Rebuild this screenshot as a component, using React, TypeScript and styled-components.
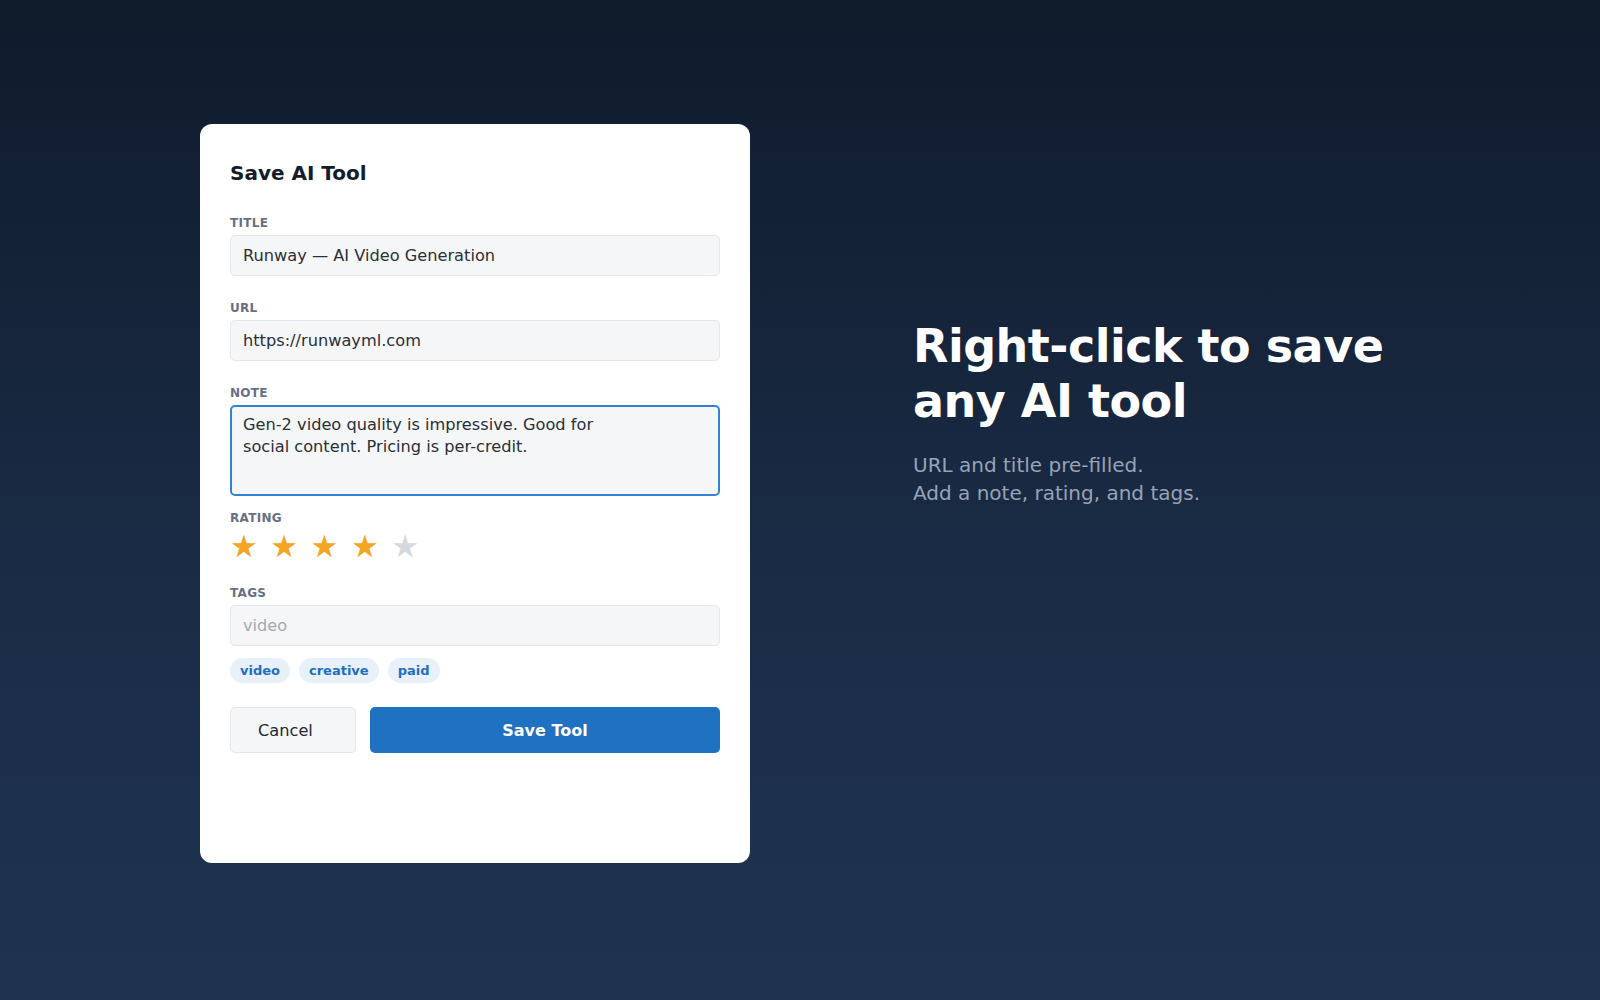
import styled, { createGlobalStyle } from "styled-components";

const GlobalStyle = createGlobalStyle`
  * {
    box-sizing: border-box;
  }
  html,
  body {
    margin: 0;
    padding: 0;
  }
  body {
    font-family: "DejaVu Sans", "Liberation Sans", sans-serif;
    background: #0f1b2b;
  }
`;

const tags = ["video", "creative", "paid"];
const rating = 4;

const App = () => {
  return (
    <Page>
      <GlobalStyle />
      <Card>
        <CardTitle>Save AI Tool</CardTitle>

        <Field>
          <Label>Title</Label>
          <Input readOnly value="Runway — AI Video Generation" />
        </Field>

        <Field>
          <Label>URL</Label>
          <Input readOnly value="https://runwayml.com" />
        </Field>

        <Field $gap={15}>
          <Label>Note</Label>
          <NoteArea
            readOnly
            value={"Gen-2 video quality is impressive. Good for\nsocial content. Pricing is per-credit."}
          />
        </Field>

        <Field $gap={24}>
          <Label>Rating</Label>
          <Stars>
            {[1, 2, 3, 4, 5].map((n) => (
              <Star key={n} $on={n <= rating}>
                ★
              </Star>
            ))}
          </Stars>
        </Field>

        <Field $gap={12}>
          <Label>Tags</Label>
          <Input readOnly placeholder="video" />
        </Field>

        <ChipRow>
          {tags.map((t) => (
            <Chip key={t}>{t}</Chip>
          ))}
        </ChipRow>

        <Actions>
          <CancelButton>Cancel</CancelButton>
          <SaveButton>Save Tool</SaveButton>
        </Actions>
      </Card>

      <Pitch>
        <Headline>Right-click to save any AI tool</Headline>
        <Subline>
          URL and title pre-filled.
          <br />
          Add a note, rating, and tags.
        </Subline>
      </Pitch>
    </Page>
  );
};

const Page = styled.div`
  min-height: 100vh;
  display: flex;
  align-items: flex-start;
  gap: 163px;
  padding: 124px 200px;
  background: linear-gradient(180deg, #0f1b2b 0%, #1a2b45 55%, #1f3350 100%);
`;

const Card = styled.div`
  width: 550px;
  min-height: 739px;
  flex: 0 0 auto;
  display: flex;
  flex-direction: column;
  padding: 37px 30px 30px;
  background: #ffffff;
  border-radius: 12px;
`;

const CardTitle = styled.h2`
  margin: 0 0 31px;
  font-size: 20px;
  line-height: 24px;
  font-weight: 700;
  color: #141c2b;
`;

const Field = styled.div<{ $gap?: number }>`
  display: flex;
  flex-direction: column;
  margin-bottom: ${(p) => p.$gap ?? 25}px;
`;

const Label = styled.label`
  margin-bottom: 5px;
  font-size: 12px;
  line-height: 14px;
  font-weight: 700;
  letter-spacing: 0.3px;
  text-transform: uppercase;
  color: #667085;
`;

const Input = styled.input`
  width: 100%;
  height: 41px;
  padding: 0 12px;
  font-family: inherit;
  font-size: 16.2px;
  color: #2a2f38;
  background: #f5f6f8;
  border: 1px solid #e3e6ea;
  border-radius: 5px;
  outline: none;

  &::placeholder {
    color: #a3a9b2;
  }
`;

const NoteArea = styled.textarea`
  display: block;
  width: 100%;
  height: 91px;
  padding: 7px 11px;
  font-family: inherit;
  font-size: 16.2px;
  line-height: 22.4px;
  color: #2a2f38;
  background: #f5f6f8;
  border: 2px solid #3483d0;
  border-radius: 5px;
  outline: none;
  resize: none;
`;

const Stars = styled.div`
  display: flex;
  gap: 13px;
  height: 32px;
  padding-top: 1px;
  align-items: center;
`;

const Star = styled.span<{ $on: boolean }>`
  width: 27.3px;
  font-size: 31px;
  line-height: 31px;
  color: ${(p) => (p.$on ? "#f5a524" : "#d5d8dd")};
`;

const ChipRow = styled.div`
  display: flex;
  gap: 9px;
  margin-bottom: 24px;
`;

const Chip = styled.span`
  height: 25px;
  padding: 0 10px;
  display: inline-flex;
  align-items: center;
  font-size: 13px;
  font-weight: 700;
  color: #1f6ec0;
  background: #e8f0fa;
  border-radius: 13px;
`;

const Actions = styled.div`
  display: flex;
  gap: 14px;
`;

const CancelButton = styled.button`
  width: 126px;
  height: 46px;
  padding: 0 0 0 27px;
  text-align: left;
  font-family: inherit;
  font-size: 16.2px;
  color: #222831;
  background: #f5f6f8;
  border: 1px solid #e3e6ea;
  border-radius: 5px;
`;

const SaveButton = styled.button`
  flex: 1;
  height: 46px;
  font-family: inherit;
  font-size: 16px;
  font-weight: 700;
  color: #ffffff;
  background: #1f71c1;
  border: none;
  border-radius: 5px;
`;

const Pitch = styled.div`
  padding-top: 195px;
  max-width: 490px;
`;

const Headline = styled.h1`
  margin: 0 0 22px;
  font-size: 46px;
  line-height: 55px;
  font-weight: 700;
  letter-spacing: -0.5px;
  color: #ffffff;
`;

const Subline = styled.p`
  margin: 0;
  font-size: 20px;
  line-height: 28px;
  color: #97a3b6;
`;

export default App;
